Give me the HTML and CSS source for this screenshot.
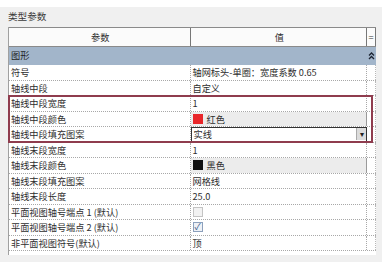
FILE: index.html
```html
<!DOCTYPE html>
<html lang="zh-CN">
<head>
    <meta charset="UTF-8">
    <title>类型参数</title>
    <link rel="stylesheet" href="styles.css">
</head>
<body>
<div class="panel">
    <div class="title">类型参数</div>
    <div class="grid">
        <div class="row head">
            <div class="cell name">参数</div>
            <div class="cell val">值</div>
            <div class="cell eq">=</div>
        </div>
        <div class="row group">
            <div class="cell name">图形</div>
            <div class="cell val"></div>
            <div class="cell eq">
                <svg width="7" height="8" viewBox="0 0 7 8"><path d="M1 3.5 L3.5 1 L6 3.5 M1 7 L3.5 4.5 L6 7" fill="none" stroke="#1d2433" stroke-width="1.3"/></svg>
            </div>
        </div>
        <div class="row">
            <div class="cell name">符号</div>
            <div class="cell val">轴网标头-单圈：宽度系数 0.65</div>
            <div class="cell eq"></div>
        </div>
        <div class="row">
            <div class="cell name">轴线中段</div>
            <div class="cell val">自定义</div>
            <div class="cell eq"></div>
        </div>
        <div class="marked">
            <div class="row">
                <div class="cell name">轴线中段宽度</div>
                <div class="cell val">1</div>
                <div class="cell eq"></div>
            </div>
            <div class="row">
                <div class="cell name">轴线中段颜色</div>
                <div class="cell val button"><span class="swatch red"></span>红色</div>
                <div class="cell eq"></div>
            </div>
            <div class="row">
                <div class="cell name">轴线中段填充图案</div>
                <div class="cell val select">实线<span class="arrow">&#9662;</span></div>
                <div class="cell eq"></div>
            </div>
        </div>
        <div class="row">
            <div class="cell name">轴线末段宽度</div>
            <div class="cell val">1</div>
            <div class="cell eq"></div>
        </div>
        <div class="row">
            <div class="cell name">轴线末段颜色</div>
            <div class="cell val button"><span class="swatch black"></span>黑色</div>
            <div class="cell eq"></div>
        </div>
        <div class="row">
            <div class="cell name">轴线末段填充图案</div>
            <div class="cell val">网格线</div>
            <div class="cell eq"></div>
        </div>
        <div class="row">
            <div class="cell name">轴线末段长度</div>
            <div class="cell val">25.0</div>
            <div class="cell eq"></div>
        </div>
        <div class="row">
            <div class="cell name">平面视图轴号端点 1 (默认)</div>
            <div class="cell val"><span class="check off"></span></div>
            <div class="cell eq"></div>
        </div>
        <div class="row">
            <div class="cell name">平面视图轴号端点 2 (默认)</div>
            <div class="cell val"><span class="check on">&#10003;</span></div>
            <div class="cell eq"></div>
        </div>
        <div class="row">
            <div class="cell name">非平面视图符号(默认)</div>
            <div class="cell val">顶</div>
            <div class="cell eq"></div>
        </div>
    </div>
</div>
</body>
</html>
```

FILE: styles.css
```css
* {
    box-sizing: border-box;
}

html, body {
    margin: 0;
    padding: 0;
    background: #fff;
    font-family: 'Noto Sans CJK SC', 'Liberation Sans', sans-serif;
    font-size: 9.2px;
    color: #2e2e2e;
}

.panel {
    width: 382px;
    height: 255px;
    margin-top: 7px;
    background: #f0f0f0;
    padding: 0 6px 0 8px;
}

.title {
    height: 20px;
    line-height: 17px;
    font-size: 9.6px;
    color: #3a3a3a;
    padding-top: 1px;
}

.grid {
    background: #fff;
    border-left: 1px solid #a0a0a0;
    height: 228px;
}

.row {
    display: flex;
    height: 15.5px;
    line-height: 14px;
    border-bottom: 1px dotted #a8a8a8;
}

.cell {
    white-space: nowrap;
    overflow: hidden;
}

.name {
    width: 182px;
    padding-left: 2px;
    border-right: 1px dotted #a8a8a8;
}

.val {
    width: 177px;
    padding-left: 2px;
    border-right: 1px dotted #a8a8a8;
    display: flex;
    align-items: center;
}

.eq {
    width: 9px;
    border-right: 1px dotted #b8b8b8;
}

.head {
    height: 20px;
    line-height: 18px;
    border-top: 1px solid #8a8a8a;
    border-bottom: 1px solid #8a8a8a;
    background: #fbfbfb;
}

.head .name,
.head .val {
    justify-content: center;
    text-align: center;
    border-right: 1px solid #777;
}

.head .eq {
    text-align: center;
    border-right: 1px solid #777;
    color: #333;
}

.group {
    height: 18px;
    line-height: 17px;
    background: #a2b5ca;
    border-bottom: none;
    color: #1e1e1e;
}

.group .name,
.group .val {
    border-right: none;
}

.group .eq {
    border-right: none;
    display: flex;
    align-items: center;
    justify-content: center;
}

.marked {
    position: relative;
}

.marked::after {
    content: "";
    position: absolute;
    left: -1px;
    top: -1px;
    width: 361px;
    bottom: 0;
    border: 2px solid #8f3c4e;
    pointer-events: none;
}

.button {
    background: #ececec;
    border-right: 1px solid #9a9a9a;
}

.swatch {
    display: inline-block;
    width: 10px;
    height: 10px;
    margin-right: 4px;
}

.red {
    background: #e8262a;
}

.black {
    background: #111;
}

.select {
    border: 1px solid #333;
    justify-content: space-between;
    padding-right: 0;
}

.arrow {
    width: 10px;
    height: 12px;
    background: #dcdcdc;
    border-left: 1px solid #aaa;
    font-size: 8px;
    line-height: 12px;
    text-align: center;
    color: #222;
}

.check {
    display: inline-block;
    width: 10px;
    height: 10px;
    border: 1px solid #c4c4c4;
    background: #f2f2f2;
    font-size: 9px;
    line-height: 8px;
    text-align: center;
}

.check.on {
    border-color: #8ca0bc;
    background: #eef1f6;
    color: #3c5a8c;
}
```
